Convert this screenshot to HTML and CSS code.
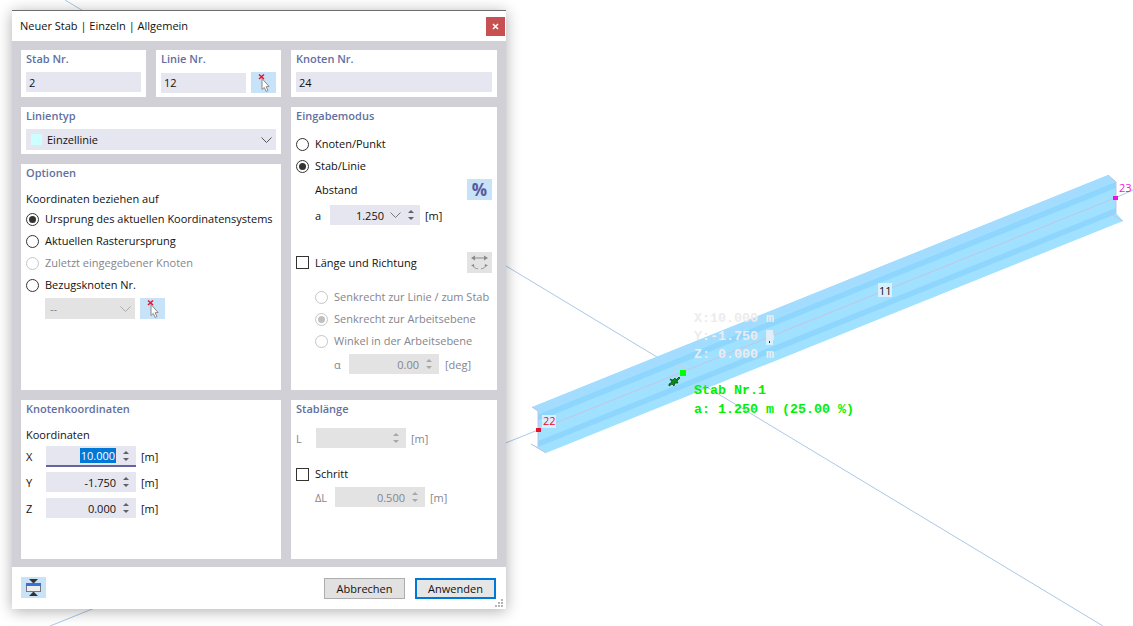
FILE: index.html
```html
<!DOCTYPE html>
<html lang="de">
<head>
<meta charset="utf-8">
<title>Neuer Stab</title>
<link rel="stylesheet" href="styles.css">
</head>
<body>
<svg class="scene" width="1133" height="626" viewBox="0 0 1133 626">
  <defs>
    <clipPath id="beamclip"><polygon points="532,407 1108,175 1116,182 1116,213 1123,221 546,453 531,444 538,447 538,411"/></clipPath>
  </defs>
  <line x1="65" y1="0" x2="1103" y2="626" class="axis"/>
  <line x1="50" y1="626" x2="538" y2="430" class="axis"/>
  <line x1="1115" y1="198" x2="1133" y2="190" class="axis"/>
  <g clip-path="url(#beamclip)">
    <rect x="520" y="160" width="613" height="300" fill="#9fe1ff"/>
    <polygon points="530,408 1125,168 1125,177 530,417" fill="#a3dcff"/>
    <polygon points="538,414.6 1116,181.8 1116,188 538,420.8" fill="#8fd6ff"/>
    <polygon points="538,441 1116,208 1116,214 538,447" fill="#8fd6ff"/>
  </g>
  <polyline points="532,407 538,411 538,447" class="edge"/>
  <polyline points="531,444 546,453" class="edge"/>
  <polyline points="1108,175 1116,182 1116,213" class="edge"/>
  <polyline points="1108,212 1123,221" class="edge"/>
  <line x1="538" y1="430" x2="1115" y2="198" class="centre"/>
  <circle cx="680" cy="372" r="6" class="halo"/>
  <rect x="542" y="415" width="14" height="13" class="tag"/>
  <text x="543" y="425" class="num num-red">22</text>
  <rect x="878" y="283" width="14" height="14" class="tag"/>
  <text x="879" y="295" class="num num-black">11</text>
  <text x="1119" y="192" class="num num-pink">23</text>
  <rect x="536" y="428" width="5" height="4" fill="#e8112d"/>
  <rect x="1113" y="196" width="5" height="4" fill="#f010e0"/>
  <rect x="766" y="330" width="7" height="15" class="tag"/>
  <rect x="769" y="341" width="1" height="2" fill="#222"/>
  <text x="694" y="322" class="mono mono-pale">X:10.000 m</text>
  <text x="694" y="340" class="mono mono-pale">Y:-1.750 m</text>
  <text x="694" y="358" class="mono mono-pale">Z: 0.000 m</text>
  <text x="694" y="394" class="mono mono-green">Stab Nr.1</text>
  <text x="694" y="413" class="mono mono-green">a: 1.250 m (25.00 %)</text>
  <rect x="680" y="370" width="6" height="6" fill="#00ff00"/>
  <path d="M669 384l3-2-2-3 3 1 2-2 1 2 3-3 1 1-3 3 1 2-3 0-1 3-2-2-3 2z" fill="#0d8a14" stroke="#0a3d0a" stroke-width="0.7"/>
</svg>

<main class="dialog">
  <header class="titlebar">
    <span class="title">Neuer Stab | Einzeln | Allgemein</span>
    <button class="close" type="button">
      <svg width="7" height="7" viewBox="0 0 7 7"><path d="M1 1l5 5M6 1L1 6" stroke="#fff" stroke-width="1.600"/></svg>
    </button>
  </header>

  <div class="body">
    <section class="panel">
      <h2 class="ptitle">Stab Nr.</h2>
      <div class="row row-first"><div class="field grow"><span class="val-left">2</span></div></div>
    </section>
    <section class="panel">
      <h2 class="ptitle">Linie Nr.</h2>
      <div class="row row-first">
        <div class="field w85"><span class="val-left">12</span></div>
        <button class="tool pick" type="button">
          <svg width="19" height="19" viewBox="0 0 19 19"><path d="M8 5.500v11l2.300-2 1.900 4 1.800-.9-1.900-3.900 3-.2z" fill="#fff" stroke="#8a8a8a"/><path d="M5 1.500l5 4.500M10 1.500L5 6" stroke="#e8112d" stroke-width="1.500"/></svg>
        </button>
      </div>
    </section>
    <section class="panel">
      <h2 class="ptitle">Knoten Nr.</h2>
      <div class="row row-first"><div class="field grow"><span class="val-left">24</span></div></div>
    </section>

    <section class="panel span2">
      <h2 class="ptitle">Linientyp</h2>
      <div class="row row-first">
        <div class="field select grow">
          <span class="swatch"></span>
          <span class="val-grow">Einzellinie</span>
          <svg class="chev" width="11" height="6" viewBox="0 0 11 6"><path d="M.5.500l5 5 5-5" fill="none" stroke="#555"/></svg>
        </div>
      </div>
    </section>

    <section class="panel tall">
      <h2 class="ptitle">Eingabemodus</h2>
      <label class="opt first"><span class="radio"></span>Knoten/Punkt</label>
      <label class="opt"><span class="radio on"></span>Stab/Linie</label>
      <div class="row between gap2 indent h21">
        <span>Abstand</span>
        <button class="tool percent" type="button">%</button>
      </div>
      <div class="row gap5 indent h20">
        <span class="lab15">a</span>
        <div class="field w90">
          <span class="val-right">1.250</span>
          <svg class="chev-sm" width="11" height="6" viewBox="0 0 11 6"><path d="M.5.500l5 5 5-5" fill="none" stroke="#777"/></svg>
          <span class="spin"></span>
        </div>
        <span class="unit">[m]</span>
      </div>
      <div class="row between gap27 h21">
        <label class="opt-inline"><span class="check"></span>Länge und Richtung</label>
        <button class="tool tool-off" type="button">
          <svg width="19" height="17" viewBox="0 0 19 17"><path d="M3 4h13" stroke="#8a8a8a"/><path d="M1 4l4-2.500v5zM18 4l-4-2.500v5z" fill="#8a8a8a"/><path d="M2.500 11c1 2.500 3 3.500 5.500 3.800M16.500 11c-1 2.500-3 3.500-5.500 3.800" fill="none" stroke="#9a9a9a"/><path d="M1 11.500l3-1.500.3 3zM18 11.500l-3-1.500-.3 3z" fill="#8a8a8a"/></svg>
        </button>
      </div>
      <label class="opt off indent gap13"><span class="radio"></span>Senkrecht zur Linie / zum Stab</label>
      <label class="opt off indent"><span class="radio on"></span>Senkrecht zur Arbeitsebene</label>
      <label class="opt off indent"><span class="radio"></span>Winkel in der Arbeitsebene</label>
      <div class="row gap2 indent2 h20 off">
        <span class="lab15">α</span>
        <div class="field field-off w90">
          <span class="val-right">0.00</span>
          <span class="spin"></span>
        </div>
        <span class="unit unit-deg">[deg]</span>
      </div>
    </section>

    <section class="panel span2 mid">
      <h2 class="ptitle">Optionen</h2>
      <p class="line first">Koordinaten beziehen auf</p>
      <label class="opt"><span class="radio on"></span>Ursprung des aktuellen Koordinatensystems</label>
      <label class="opt"><span class="radio"></span>Aktuellen Rasterursprung</label>
      <label class="opt off"><span class="radio"></span>Zuletzt eingegebener Knoten</label>
      <label class="opt"><span class="radio"></span>Bezugsknoten Nr.</label>
      <div class="row gap2 indent h21">
        <div class="field field-off select w90">
          <span class="val-grow">--</span>
          <svg class="chev" width="11" height="6" viewBox="0 0 11 6"><path d="M.5.500l5 5 5-5" fill="none" stroke="#aaa"/></svg>
        </div>
        <button class="tool pick" type="button">
          <svg width="19" height="19" viewBox="0 0 19 19"><path d="M8 5.500v11l2.300-2 1.900 4 1.800-.9-1.900-3.900 3-.2z" fill="#fff" stroke="#8a8a8a"/><path d="M5 1.500l5 4.500M10 1.500L5 6" stroke="#e8112d" stroke-width="1.500"/></svg>
        </button>
      </div>
    </section>

    <section class="panel span2">
      <h2 class="ptitle">Knotenkoordinaten</h2>
      <p class="line first">Koordinaten</p>
      <div class="row gap2 h21">
        <span class="lab20">X</span>
        <div class="field w90 focus">
          <span class="val-right"><span class="selected">10.000</span></span>
          <span class="spin"></span>
        </div>
        <span class="unit">[m]</span>
      </div>
      <div class="row gap5 h20">
        <span class="lab20">Y</span>
        <div class="field w90"><span class="val-right">-1.750</span><span class="spin"></span></div>
        <span class="unit">[m]</span>
      </div>
      <div class="row gap6 h20">
        <span class="lab20">Z</span>
        <div class="field w90"><span class="val-right">0.000</span><span class="spin"></span></div>
        <span class="unit">[m]</span>
      </div>
    </section>

    <section class="panel">
      <h2 class="ptitle">Stablänge</h2>
      <div class="row gap9 h20 off">
        <span class="lab20">L</span>
        <div class="field field-off w90"><span class="val-right"></span><span class="spin"></span></div>
        <span class="unit">[m]</span>
      </div>
      <div class="row gap15 h22 lift">
        <label class="opt-inline"><span class="check"></span>Schritt</label>
      </div>
      <div class="row gap2 indent h20 off">
        <span class="lab20">ΔL</span>
        <div class="field field-off w90"><span class="val-right">0.500</span><span class="spin"></span></div>
        <span class="unit">[m]</span>
      </div>
    </section>
  </div>

  <footer class="footer">
    <button class="tool" type="button">
      <svg width="19" height="19" viewBox="0 0 19 19"><path d="M5 1h9L9.500 5.500zM5 18h9L9.500 13.500z" fill="#333"/><rect x="2.500" y="5.500" width="14" height="8" fill="#eee" stroke="#777"/><rect x="2" y="5" width="15" height="3" fill="#3a6fd8"/></svg>
    </button>
    <div class="actions">
      <button class="btn" type="button">Abbrechen</button>
      <button class="btn primary" type="button">Anwenden</button>
    </div>
    <svg class="grip" width="8" height="8" viewBox="0 0 8 8"><path d="M6 0h2v2H6zM3 3h2v2H3zM6 3h2v2H6zM0 6h2v2H0zM3 6h2v2H3zM6 6h2v2H6z" fill="#b5b5b5"/></svg>
  </footer>
</main>
</body>
</html>
```

FILE: styles.css
```css
* { box-sizing: border-box; }
html, body { margin: 0; padding: 0; }
body {
  width: 1133px;
  height: 626px;
  background: #fff;
  overflow: hidden;
  position: relative;
  font-family: "Open Sans", "Noto Sans", sans-serif;
  font-size: 11px;
  color: #111;
}

/* free canvas behind the dialog */
.scene { position: absolute; left: 0; top: 0; display: block; }
.axis { stroke: #a9c8ea; stroke-width: 1; }
.edge { fill: none; stroke: #c2c2de; stroke-width: 1; }
.centre { stroke: #c4c4e2; stroke-width: 1; }
.halo { fill: none; stroke: #c9cfe8; stroke-width: 1; }
.tag { fill: #d9f1ff; }
.num { font-family: "Open Sans", sans-serif; font-size: 11px; }
.num-red { fill: #e01020; }
.num-black { fill: #111; }
.num-pink { fill: #f010d8; }
.mono { font-family: "Liberation Mono", monospace; font-size: 13.33px; font-weight: 700; }
.mono-pale { fill: #ececec; }
.mono-green { fill: #00f000; }

/* window */
.dialog {
  position: absolute;
  left: 12px;
  top: 10px;
  width: 494px;
  height: 599px;
  display: flex;
  flex-direction: column;
  background: #fff;
  border-top: 1px solid #6e6e6e;
  box-shadow: 0 2px 14px rgba(0, 0, 0, .32);
}
.titlebar {
  height: 30px;
  flex: none;
  display: flex;
  align-items: center;
  justify-content: space-between;
  padding: 0 1px 2px 8px;
}
.title { font-size: 11px; }
.close {
  width: 19px;
  height: 19px;
  padding: 0;
  border: 0;
  background: #c75050;
  display: flex;
  align-items: center;
  justify-content: center;
  margin-top: 3px;
}
.body {
  height: 526px;
  flex: none;
  background: #d0d0d6;
  padding: 9px 9px 8px;
  display: grid;
  grid-template-columns: 125px 125px 206px;
  grid-template-rows: 47px 47px 226px 159px;
  gap: 10px;
}
.panel { background: #fff; padding: 0 5px; min-width: 0; }
.span2 { grid-column: span 2; }
.tall { grid-column: 3; grid-row: 2 / span 2; }
.mid { grid-column: 1 / span 2; grid-row: 3; }
.ptitle {
  margin: 0;
  height: 19px;
  font-size: 11px;
  line-height: 17px;
  font-weight: 600;
  color: #63709f;
}

/* rows */
.row { display: flex; align-items: center; }
.row-first { margin-top: 3px; gap: 5px; }
.between { justify-content: space-between; }
.h20 { height: 20px; }
.h21 { height: 21px; }
.h22 { height: 22px; }
.gap2 { margin-top: 2px; }
.gap5 { margin-top: 5px; }
.gap6 { margin-top: 6px; }
.gap9 { margin-top: 9px; }
.gap13 { margin-top: 13px; }
.gap15 { margin-top: 15px; }
.gap27 { margin-top: 27px; }
.indent { margin-left: 19px; }
.indent2 { margin-left: 38px; }
.row.gap2.indent.h21 > .tool.pick { margin-left: 5px; }
.lift { padding-bottom: 2px; }
.lift .check { margin-top: 2px; }

.line { margin: 7px 0 0; height: 18px; line-height: 18px; }
.opt { display: flex; align-items: center; height: 22px; padding-bottom: 2px; white-space: nowrap; }
.opt.first { margin-top: 7px; }
.opt-inline { display: flex; align-items: center; white-space: nowrap; }
.off { color: #85858c; }

.radio {
  width: 13px;
  height: 13px;
  margin: 2px 6px 0 0;
  flex: none;
  border: 1.2px solid #333;
  border-radius: 50%;
  background: #fff;
  display: flex;
  align-items: center;
  justify-content: center;
}
.radio.on::after {
  content: "";
  width: 7px;
  height: 7px;
  border-radius: 50%;
  background: #333;
}
.off .radio { border-color: #c6c6c6; }
.off .radio.on::after { background: #c0c0c0; }
.check {
  width: 13px;
  height: 13px;
  margin-right: 6px;
  border: 1.2px solid #333;
  background: #fff;
}

/* inputs */
.field {
  height: 20px;
  background: #e6e6f0;
  display: flex;
  align-items: center;
  flex: none;
}
.field.grow { flex: 1; }
.field.select { height: 21px; }
.field-off { background: #e3e3e3; color: #85858c; }
.w85 { width: 85px; }
.w90 { width: 90px; }
.val-left { padding-left: 3px; }
.val-grow { flex: 1; padding-left: 5px; }
.val-right { flex: 1; text-align: right; }
.swatch { width: 11px; height: 11px; margin-left: 5px; background: #ccffff; flex: none; }
.swatch + .val-grow { padding-left: 5px; }
.chev { margin-right: 4px; flex: none; }
.chev-sm { margin-left: 6px; flex: none; }
.spin {
  width: 20px;
  flex: none;
  display: flex;
  flex-direction: column;
  align-items: center;
  gap: 4px;
}
.spin::before, .spin::after {
  content: "";
  width: 0;
  height: 0;
  border-left: 3px solid transparent;
  border-right: 3px solid transparent;
}
.spin::before { border-bottom: 3px solid #606068; }
.spin::after { border-top: 3px solid #606068; }
.field-off .spin::before { border-bottom-color: #a8a8a8; }
.field-off .spin::after { border-top-color: #a8a8a8; }
.chev-sm + .spin { width: 19px; }
.focus { height: 21px; border-bottom: 2px solid #6464a4; }
.selected { background: #0078d7; color: #fff; padding: 0 1px; }
.lab15 { width: 15px; flex: none; }
.lab20 { width: 20px; flex: none; }
.unit { margin-left: 5px; }
.unit-deg { margin-left: 6px; }

/* buttons */
.tool {
  width: 25px;
  height: 21px;
  padding: 0;
  flex: none;
  border: 0;
  background: #c8e2f8;
  display: flex;
  align-items: center;
  justify-content: center;
}
.tool-off { background: #e3e3e3; }
.percent {
  font-family: "Open Sans", sans-serif;
  font-size: 17px;
  font-weight: 700;
  color: #5a5a9c;
}
.footer {
  height: 42px;
  flex: none;
  display: flex;
  align-items: flex-start;
  justify-content: space-between;
  padding: 10px 10px 0 9px;
  position: relative;
}
.actions { display: flex; gap: 10px; margin-top: 1px; }
.btn {
  width: 81px;
  height: 21px;
  padding: 0;
  font: inherit;
  color: #111;
  background: #e1e1e1;
  border: 1px solid #adadad;
}
.primary { background: #e6e6e6; border: 2px solid #0078d7; }
.grip { position: absolute; right: 3px; bottom: 2px; }
```
